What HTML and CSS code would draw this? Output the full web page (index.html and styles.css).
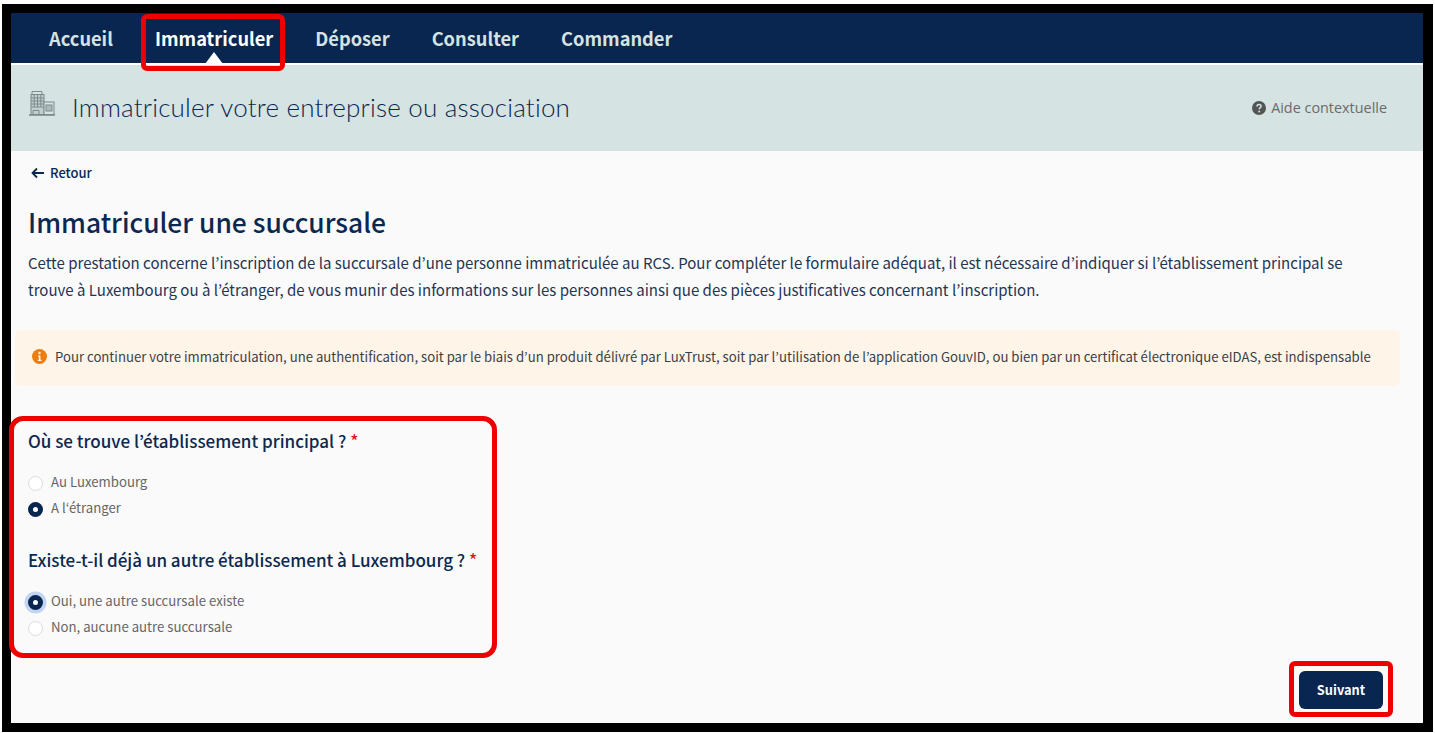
FILE: index.html
```html
<!DOCTYPE html>
<html lang="fr">
<head>
    <meta charset="UTF-8">
    <title>Immatriculer une succursale</title>
    <link rel="stylesheet" href="styles.css">
</head>
<body>
    <div class="frame">
        <nav class="topnav">
            <a class="nav-item">Accueil</a>
            <a class="nav-item active">Immatriculer<span class="mark"></span></a>
            <a class="nav-item">Déposer</a>
            <a class="nav-item">Consulter</a>
            <a class="nav-item">Commander</a>
        </nav>
        <header class="band">
            <svg class="band-icon" viewBox="0 0 28 28" fill="none" stroke="#7d8a8c" stroke-width="1">
                <path d="M4 4.5V1.5h10v3"/>
                <rect x="3" y="4.5" width="13" height="20" fill="#c3cfcf"/>
                <path d="M3 8h13M3 11h13M3 14h13M3 17h13M6.2 4.5V17M9.5 4.5V17M12.8 4.5V17"/>
                <path d="M5 24.5v-4h6v4"/>
                <rect x="16" y="12" width="10" height="12.5" fill="#d5e3e2"/>
                <rect x="18" y="15" width="6" height="6" fill="#aebaba"/>
                <path d="M1 25h26" stroke-width="1.6"/>
            </svg>
            <h1 class="band-title">Immatriculer votre entreprise ou association</h1>
            <a class="help">
                <svg class="help-icon" viewBox="0 0 14 14">
                    <circle cx="7" cy="7" r="7" fill="#555"/>
                    <path d="M5 5.4c0-1.2 .9-1.9 2.1-1.9s2 .7 2 1.8c0 1.5-1.9 1.5-1.9 2.9" fill="none" stroke="#d5e3e2" stroke-width="1.5"/>
                    <circle cx="7.2" cy="10.5" r=".95" fill="#d5e3e2"/>
                </svg>
                Aide contextuelle
            </a>
        </header>
        <main class="content">
            <a class="back"><span class="back-arrow">
                <svg viewBox="0 0 14 12" fill="none" stroke="#0b2850" stroke-width="1.8"><path d="M13 6H2M6 1.5L1.5 6 6 10.5"/></svg>
            </span>Retour</a>
            <h2 class="page-title">Immatriculer une succursale</h2>
            <p class="intro">Cette prestation concerne l’inscription de la succursale d’une personne immatriculée au RCS. Pour compléter le formulaire adéquat, il est nécessaire d’indiquer si l’établissement principal se trouve à Luxembourg ou à l’étranger, de vous munir des informations sur les personnes ainsi que des pièces justificatives concernant l’inscription.</p>
            <div class="notice">
                <svg class="notice-icon" viewBox="0 0 14 14">
                    <circle cx="7" cy="7" r="7" fill="#ee7d11"/>
                    <circle cx="7" cy="3.7" r="1.1" fill="#fff4e8"/>
                    <path d="M5.6 6h2.3v4h1v1.2H5.4V10h1V7.2h-.8z" fill="#fff4e8"/>
                </svg>
                Pour continuer votre immatriculation, une authentification, soit par le biais d’un produit délivré par LuxTrust, soit par l’utilisation de l’application GouvID, ou bien par un certificat électronique eIDAS, est indispensable
            </div>
            <form class="questions">
                <span class="mark"></span>
                <fieldset class="question">
                    <legend class="question-label">Où se trouve l’établissement principal ? <span class="req">*</span></legend>
                    <label class="option"><span class="radio"></span>Au Luxembourg</label>
                    <label class="option"><span class="radio checked"></span>A l‘étranger</label>
                </fieldset>
                <fieldset class="question">
                    <legend class="question-label">Existe-t-il déjà un autre établissement à Luxembourg ? <span class="req">*</span></legend>
                    <label class="option"><span class="radio checked focused"></span>Oui, une autre succursale existe</label>
                    <label class="option"><span class="radio"></span>Non, aucune autre succursale</label>
                </fieldset>
            </form>
            <div class="actions">
                <button class="btn-next" type="button">Suivant<span class="mark"></span></button>
            </div>
        </main>
    </div>
</body>
</html>
```

FILE: styles.css
```css
* {
    box-sizing: border-box;
}
body {
    margin: 0;
    background: #fff;
    font-family: "Noto Sans CJK KR", "Noto Sans", sans-serif;
    color: #0b2850;
}
.frame {
    margin: 4px 2px 0;
    width: 1431px;
    height: 728px;
    border: 9px solid #000;
    border-right-width: 10px;
    background: #fafafa;
    display: flex;
    flex-direction: column;
}
.mark {
    position: absolute;
    border: 5px solid #ee0000;
    border-radius: 6px;
    pointer-events: none;
}

.topnav {
    height: 52px;
    flex: none;
    background: #092650;
    border-bottom: 2px solid #fff;
    display: flex;
    gap: 42px;
    padding-left: 38px;
}
.nav-item {
    position: relative;
    font-size: 18.25px;
    line-height: 50px;
    font-weight: 700;
    color: #d5e3e2;
}
.nav-item.active {
    color: #fff;
}
.nav-item.active::after {
    content: "";
    position: absolute;
    left: 50px;
    bottom: -1px;
    border: 9px solid transparent;
    border-top: 0;
    border-bottom: 12px solid #fff;
}
.nav-item .mark {
    top: 1px;
    left: -14px;
    right: -12px;
    height: 57px;
}

.band {
    height: 86px;
    flex: none;
    background: #d5e3e2;
    display: flex;
    align-items: center;
    padding: 0 36px 0 17px;
}
.band-icon {
    width: 28px;
    height: 28px;
    margin: -9px 16px 0 0;
}
.band-title {
    margin: -2px 0 0;
    flex: 1;
    font-family: Lato, sans-serif;
    font-size: 26px;
    font-weight: 300;
    letter-spacing: .2px;
    color: #0b2850;
}
.help {
    display: flex;
    align-items: center;
    gap: 5.5px;
    margin-top: -1px;
    font-family: "Open Sans", sans-serif;
    font-size: 14.4px;
    color: #6b6b6b;
}
.help-icon {
    width: 14px;
    height: 14px;
}

.content {
    flex: 1;
    position: relative;
    padding: 13px 0 0 17px;
}
.back {
    display: flex;
    align-items: center;
    gap: 5px;
    height: 18px;
    margin-left: 3px;
    font-size: 13px;
    font-weight: 500;
    line-height: 18px;
}
.back-arrow svg {
    display: block;
    width: 14px;
    height: 12px;
}
.page-title {
    margin: 20px 0 0;
    font-size: 26.4px;
    font-weight: 500;
    line-height: 40px;
}
.intro {
    margin: 7px 60px 0 0;
    font-size: 15.03px;
    line-height: 27px;
    color: #1f3553;
}
.notice {
    display: flex;
    align-items: center;
    gap: 8px;
    width: 1385px;
    height: 56px;
    margin: 27px 0 0 -13px;
    padding: 0 0 3px 17px;
    background: #fff4e8;
    border-radius: 5px;
    font-size: 13.16px;
    color: #3a3f46;
    white-space: nowrap;
}
.notice-icon {
    width: 15px;
    height: 15px;
    flex: none;
}

.questions {
    position: relative;
    margin-top: 41px;
}
.questions > .mark {
    top: -11px;
    left: -19px;
    width: 488px;
    height: 242px;
    border-radius: 14px;
}
.question {
    margin: 0 0 26px;
    padding: 0;
    border: 0;
}
.question-label {
    display: block;
    padding: 0;
    margin-bottom: 14px;
    font-size: 17px;
    font-weight: 500;
    line-height: 27px;
}
.req {
    color: #e3131b;
}
.option {
    display: flex;
    align-items: center;
    height: 26px;
    font-size: 13.2px;
    color: #666;
}
.radio {
    width: 15px;
    height: 15px;
    margin: 5px 8px 0 0;
    border: 1px solid #dcdcdc;
    border-radius: 50%;
    background: #fff;
}
.radio.checked {
    border: 5px solid #092650;
}
.radio.focused {
    box-shadow: 0 0 0 3.5px #c2d4f2;
}

.actions {
    position: absolute;
    right: 40px;
    bottom: 14px;
}
.btn-next {
    position: relative;
    display: block;
    width: 84px;
    height: 38px;
    padding: 0 0 2px;
    border: 0;
    border-radius: 6px;
    background: #092650;
    color: #fff;
    font-family: inherit;
    font-size: 12.8px;
    font-weight: 700;
}
.btn-next .mark {
    top: -10px;
    left: -10px;
    right: -10px;
    bottom: -8px;
}
```
